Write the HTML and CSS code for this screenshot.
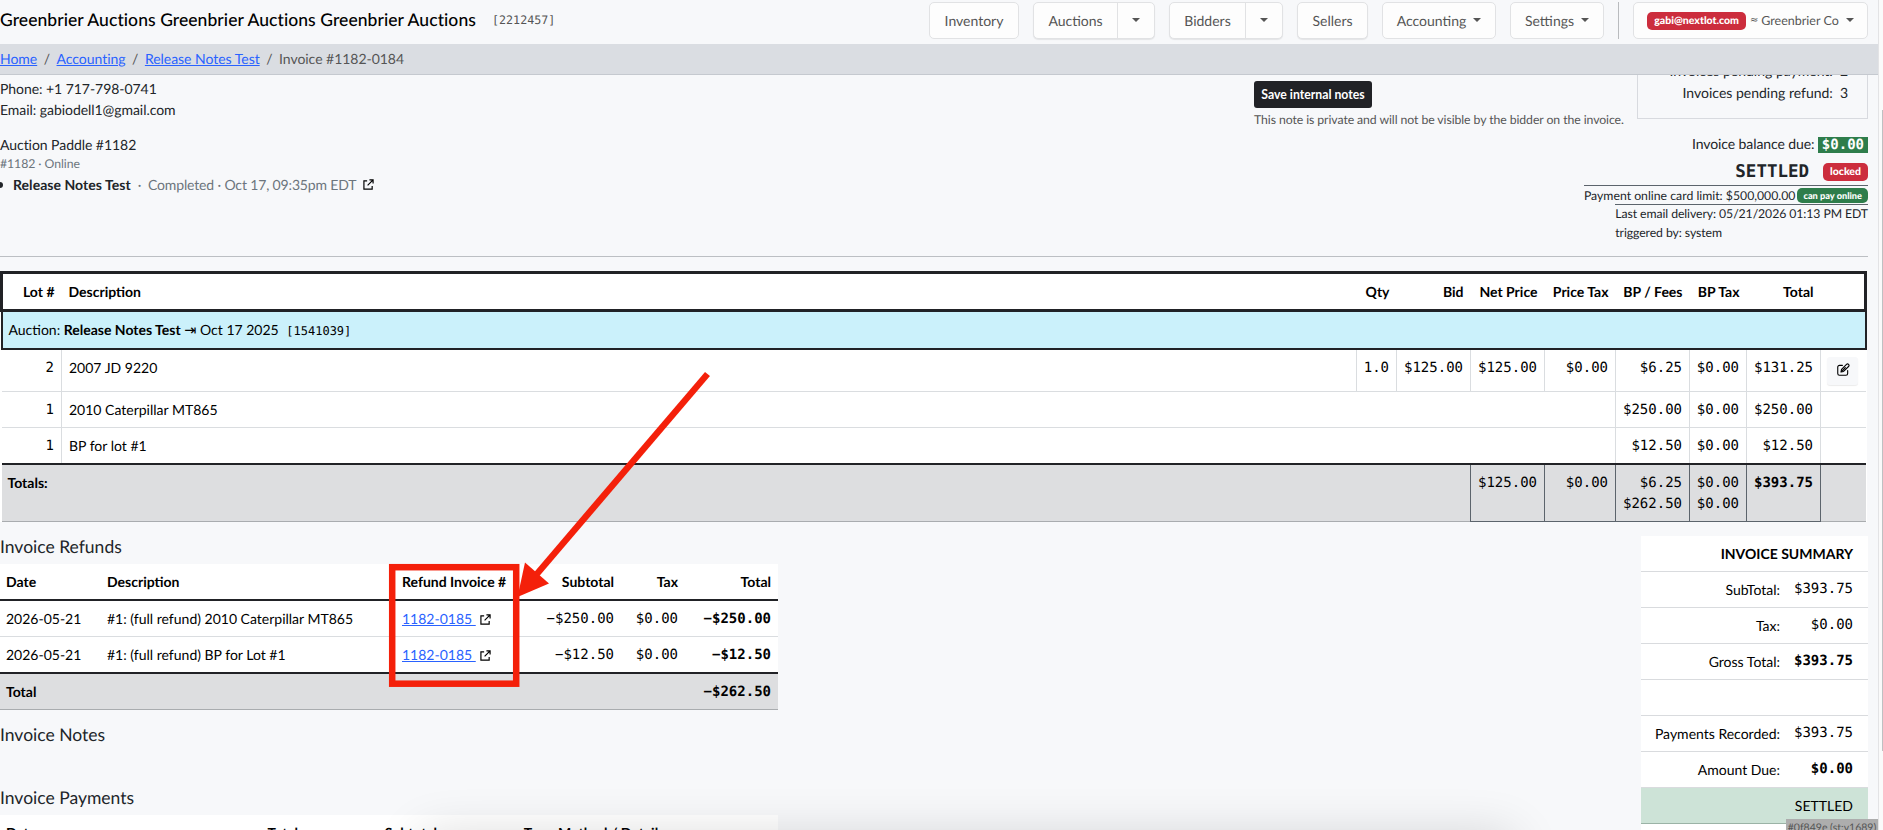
FILE: index.html
```html
<!DOCTYPE html>
<html lang="en">
<head>
    <meta charset="UTF-8">
    <meta name="viewport" content="width=device-width, initial-scale=1.0">
    <title>Invoice #1182-0184</title>
    <link rel="stylesheet" href="styles.css">
</head>
<body>
    <svg class="sprite" aria-hidden="true">
        <symbol id="external" viewBox="0 0 12 12">
            <path d="M4.500 2H1v9h9V7.500M7 1h4v4M11 1L5 7" fill="none" stroke="currentColor" stroke-width="1.300"/>
        </symbol>
        <symbol id="edit" viewBox="0 0 24 24">
            <path d="M11 4H6a3 3 0 0 0-3 3v11a3 3 0 0 0 3 3h11a3 3 0 0 0 3-3v-5M8.500 15.500l1-4.500 8.500-8.500a2.100 2.100 0 0 1 3.500 3.500L13 14.500zM11 13l5-5" fill="none" stroke="currentColor" stroke-width="1.900" stroke-linecap="round" stroke-linejoin="round"/>
        </symbol>
    </svg>

    <div class="page">
        <header class="topbar">
            <div class="brand">Greenbrier Auctions Greenbrier Auctions Greenbrier Auctions</div>
            <span class="brand-id">[2212457]</span>
            <nav class="menu">
                <a class="btn w-inventory">Inventory</a>
                <div class="btn-group w-auctions"><a>Auctions</a><a class="toggle"><i class="caret"></i></a></div>
                <div class="btn-group w-bidders"><a>Bidders</a><a class="toggle"><i class="caret"></i></a></div>
                <a class="btn w-sellers">Sellers</a>
                <a class="btn w-accounting">Accounting <i class="caret"></i></a>
                <a class="btn w-settings">Settings <i class="caret"></i></a>
                <span class="divider"></span>
                <a class="btn user"><span class="badge red">gabi@nextlot.com</span><span class="approx">≈</span><span class="company">Greenbrier Co</span> <i class="caret"></i></a>
            </nav>
        </header>

        <nav class="breadcrumb">
            <a href="#">Home</a><span class="sep">/</span><a href="#">Accounting</a><span class="sep">/</span><a href="#">Release Notes Test</a><span class="sep">/</span><span>Invoice #1182-0184</span>
        </nav>

        <main>
            <section class="info">
                <div class="contact">
                    <div>Phone: +1 717-798-0741</div>
                    <div>Email: gabiodell1@gmail.com</div>
                    <div class="paddle">Auction Paddle #1182</div>
                    <div class="small muted">#1182 · Online</div>
                    <div class="release"><i class="dot"></i><b>Release Notes Test</b><span class="muted">&nbsp; · &nbsp;Completed · Oct 17, 09:35pm EDT</span><svg class="ext"><use href="#external"/></svg></div>
                </div>
                <div class="notes">
                    <button class="save">Save internal notes</button>
                    <div class="small note">This note is private and will not be visible by the bidder on the invoice.</div>
                </div>
                <div class="status">
                    <div class="pending">
                        <div>Invoices pending payment:<span>2</span></div>
                        <div>Invoices pending refund:<span>3</span></div>
                    </div>
                    <div class="balance">Invoice balance due: <span class="amount">$0.00</span></div>
                    <div class="settled"><span class="mono">SETTLED</span><span class="badge red">locked</span></div>
                    <div class="limit">Payment online card limit: $500,000.00<span class="badge green">can pay online</span></div>
                    <div class="delivery">Last email delivery: 05/21/2026 01:13 PM EDT<br>triggered by: system</div>
                </div>
            </section>

            <table class="lots">
                <colgroup>
                    <col class="c-lot"><col><col class="c-qty"><col class="c-bid"><col class="c-net"><col class="c-ptax"><col class="c-fees"><col class="c-btax"><col class="c-total"><col class="c-edit">
                </colgroup>
                <thead>
                    <tr><th class="r">Lot #</th><th>Description</th><th class="r">Qty</th><th class="r">Bid</th><th class="r">Net Price</th><th class="r">Price Tax</th><th class="r">BP / Fees</th><th class="r">BP Tax</th><th class="r">Total</th><th></th></tr>
                </thead>
                <tbody>
                    <tr class="auction"><td colspan="10">Auction: <b>Release Notes Test</b> <span class="tab-arrow">⇥</span> Oct 17 2025 <span class="auction-id">[1541039]</span></td></tr>
                    <tr class="lot tall"><td class="num">2</td><td>2007 JD 9220</td><td class="num">1.0</td><td class="num">$125.00</td><td class="num">$125.00</td><td class="num">$0.00</td><td class="num">$6.25</td><td class="num">$0.00</td><td class="num">$131.25</td><td class="edit-cell"><button class="edit"><svg><use href="#edit"/></svg></button></td></tr>
                    <tr class="lot"><td class="num">1</td><td colspan="5">2010 Caterpillar MT865</td><td class="num">$250.00</td><td class="num">$0.00</td><td class="num">$250.00</td><td></td></tr>
                    <tr class="lot"><td class="num">1</td><td colspan="5">BP for lot #1</td><td class="num">$12.50</td><td class="num">$0.00</td><td class="num">$12.50</td><td></td></tr>
                </tbody>
                <tfoot>
                    <tr><td colspan="4"><b>Totals:</b></td><td class="num sum">$125.00</td><td class="num sum">$0.00</td><td class="num sum">$6.25<br>$262.50</td><td class="num sum">$0.00<br>$0.00</td><td class="num sum"><b>$393.75</b></td><td></td></tr>
                </tfoot>
            </table>

            <section class="lower">
                <div class="details">
                    <h5>Invoice Refunds</h5>
                    <div class="refund-wrap">
                        <table class="refunds">
                            <colgroup><col class="r-date"><col class="r-desc"><col class="r-inv"><col class="r-sub"><col class="r-tax"><col></colgroup>
                            <thead>
                                <tr><th>Date</th><th>Description</th><th>Refund Invoice #</th><th class="r">Subtotal</th><th class="r">Tax</th><th class="r">Total</th></tr>
                            </thead>
                            <tbody>
                                <tr><td>2026-05-21</td><td>#1: (full refund) 2010 Caterpillar MT865</td><td><a href="#">1182-0185&nbsp;</a><svg class="ext"><use href="#external"/></svg></td><td class="num">−$250.00</td><td class="num">$0.00</td><td class="num"><b>−$250.00</b></td></tr>
                                <tr><td>2026-05-21</td><td>#1: (full refund) BP for Lot #1</td><td><a href="#">1182-0185&nbsp;</a><svg class="ext"><use href="#external"/></svg></td><td class="num">−$12.50</td><td class="num">$0.00</td><td class="num"><b>−$12.50</b></td></tr>
                            </tbody>
                            <tfoot>
                                <tr><td colspan="5"><b>Total</b></td><td class="num"><b>−$262.50</b></td></tr>
                            </tfoot>
                        </table>
                        <!-- highlight on the refund invoice column -->
                        <svg class="callout" viewBox="380 360 340 340">
                            <rect x="392.200" y="567.200" width="124" height="116.500" fill="none" stroke="#f4200a" stroke-width="6.500"/>
                            <path d="M707.500 374L536 575" stroke="#f4200a" stroke-width="6.500"/>
                            <path d="M517.500 597L525 562.500 549 583.500z" fill="#f4200a"/>
                        </svg>
                    </div>
                    <h5 class="h-notes">Invoice Notes</h5>
                    <h5 class="h-payments">Invoice Payments</h5>
                    <table class="payments">
                        <colgroup><col class="p-date"><col class="p-total"><col class="p-sub"><col class="p-tax"><col></colgroup>
                        <tr><th>Date</th><th class="r">Total</th><th class="r">Subtotal</th><th class="r">Tax</th><th>Method / Details</th></tr>
                    </table>
                </div>
                <div class="summary">
                    <div class="row title">INVOICE SUMMARY</div>
                    <div class="row">SubTotal:<span class="value">$393.75</span></div>
                    <div class="row">Tax:<span class="value">$0.00</span></div>
                    <div class="row">Gross Total:<span class="value"><b>$393.75</b></span></div>
                    <div class="row"></div>
                    <div class="row">Payments Recorded:<span class="value">$393.75</span></div>
                    <div class="row">Amount Due:<span class="value"><b>$0.00</b></span></div>
                    <div class="row done">SETTLED</div>
                </div>
            </section>
            <div class="bottom-shade"></div>
            <div class="build">#0f849e (st:v1689)</div>
        </main>
    </div>
    <div class="scrollbar"><div class="thumb"></div></div>
</body>
</html>
```

FILE: styles.css
```css
* {
    box-sizing: border-box;
}
body {
    margin: 0;
    height: 830px;
    display: flex;
    overflow: hidden;
    background: #f7f8fa;
    color: #212529;
    font-family: Lato, sans-serif;
    font-size: 14px;
    line-height: 21px;
    text-rendering: geometricPrecision;
}
.sprite {
    position: absolute;
    width: 0;
    height: 0;
}
a {
    color: #2962ff;
}
.page {
    width: 1878px;
    height: 830px;
    display: flex;
    flex-direction: column;
}

/* Top bar */
.topbar {
    height: 44px;
    flex: none;
    display: flex;
    align-items: center;
    padding: 0 10px 3px 0;
}
.brand {
    width: 492px;
    margin-bottom: 2px;
    color: #000;
    font-size: 17.5px;
    font-weight: 500;
    letter-spacing: 0.06px;
    white-space: nowrap;
}
.brand-id {
    color: #555;
    font-family: "DejaVu Sans Mono", monospace;
    font-size: 11.7px;
}
.menu {
    margin-left: auto;
    display: flex;
    gap: 14px;
}
.menu a {
    color: #555;
    font-size: 14px;
}
.btn, .btn-group {
    height: 37px;
    display: flex;
    align-items: center;
    justify-content: center;
    background: #fdfdfd;
    border: 1px solid #e1e2e4;
    border-radius: 5px;
    white-space: nowrap;
}
.btn-group a {
    flex: 1;
    text-align: center;
}
.btn-group, .w-sellers {
    box-shadow: 0 1px 1px rgba(0, 0, 0, 0.08);
}
.btn-group .toggle {
    flex: none;
    width: 37px;
    height: 100%;
    display: flex;
    align-items: center;
    justify-content: center;
    border-left: 1px solid #e1e2e4;
}
.w-inventory { width: 90px; }
.w-auctions { width: 122px; }
.w-bidders { width: 114px; }
.w-sellers { width: 71px; }
.w-accounting { width: 114px; }
.w-settings { width: 94px; }
.user { width: 235px; }
.caret {
    border: 4px solid transparent;
    border-top-color: #555;
    border-bottom: 0;
    margin-bottom: 2px;
}
.btn .caret {
    margin-left: 7px;
}
.divider {
    width: 1px;
    background: #b9bbbe;
}
.badge {
    display: inline-block;
    padding: 0 7px;
    border-radius: 5px;
    color: #fff;
    font-size: 10.5px;
    font-weight: 900;
    line-height: 18px;
}
.red { background: #cc2d3d; }
.green { background: #2e7d4b; }
.approx {
    margin: 0 3px 0 4px;
    font-family: "DejaVu Sans", sans-serif;
    font-size: 10px;
}
.menu .company {
    font-size: 12.5px;
}

.breadcrumb {
    height: 31px;
    flex: none;
    background: #dadde2;
    border-bottom: 1px solid #c5c9cf;
    color: #555;
    letter-spacing: -0.03px;
    line-height: 30px;
}
.sep {
    margin: 0 6.5px;
}

main {
    flex: 1;
    min-height: 0;
    overflow: hidden;
    position: relative;
}

/* Bidder info */
.info {
    width: 1868px;
    height: 182px;
    display: flex;
    border-bottom: 1px solid #bcbfc3;
}
.contact {
    width: 1254px;
    flex: none;
    padding-top: 3px;
    letter-spacing: -0.05px;
}
.small {
    font-size: 12.25px;
    line-height: 18px;
}
.muted {
    color: #6c757d;
}
.paddle {
    margin-top: 14px;
}
.release {
    display: flex;
    align-items: center;
    margin-top: 1px;
}
.release b {
    letter-spacing: 0.05px;
}
.release .muted {
    letter-spacing: -0.15px;
}
.dot {
    width: 3px;
    height: 6px;
    margin-right: 10px;
    background: #212529;
    border-radius: 0 3px 3px 0;
}
.ext {
    width: 11px;
    height: 11px;
    margin-left: 4px;
    color: #000;
    vertical-align: -1px;
}
.release .ext {
    margin-left: 7px;
}
.notes {
    width: 320px;
    flex: none;
    padding-top: 6px;
    white-space: nowrap;
}
.save {
    display: block;
    width: 118px;
    height: 27px;
    padding: 0;
    border: 0;
    border-radius: 3px;
    background: #212226;
    color: #fff;
    font: bold 12.25px/25px Lato, sans-serif;
}
.note {
    margin-top: 3px;
    color: #555;
    letter-spacing: -0.08px;
}
.status {
    flex: 1;
    display: flex;
    flex-direction: column;
    align-items: flex-end;
    white-space: nowrap;
}
.pending {
    width: 231px;
    height: 60px;
    margin-top: -16px;
    padding-right: 19px;
    border: 1px solid #d8dadf;
    text-align: right;
    line-height: 22px;
}
.pending span {
    margin-left: 7px;
}
.balance {
    margin-top: 14px;
    letter-spacing: -0.1px;
}
.amount {
    display: inline-block;
    padding: 0 4px;
    background: #2e7d4b;
    color: #fff;
    font: bold 14px/16px "DejaVu Sans Mono", monospace;
    letter-spacing: 0;
}
.settled {
    height: 28px;
    margin-top: 3px;
    padding-top: 2px;
    display: flex;
    align-items: center;
}
.mono {
    margin-right: 14px;
    font: bold 17.5px/21px "DejaVu Sans Mono", monospace;
}
.limit {
    display: flex;
    align-items: center;
    height: 19px;
    border-top: 1px solid #5c646c;
    font-size: 12.25px;
}
.limit .badge {
    margin-left: 2px;
    padding: 0 6px;
    font-size: 9.2px;
    line-height: 15px;
}
.delivery {
    border-top: 1px solid #5c646c;
    font-size: 12.25px;
    letter-spacing: -0.08px;
    line-height: 18.5px;
}

/* Tables */
table {
    border-collapse: collapse;
    table-layout: fixed;
    background: #fff;
    color: #000;
}
th, td {
    padding: 7px 7px 7px 6px;
    text-align: left;
    vertical-align: top;
    white-space: nowrap;
}
.r {
    text-align: right;
}
.num {
    padding-top: 8px;
    padding-bottom: 6px;
    text-align: right;
    font-family: "DejaVu Sans Mono", monospace;
}
.lots {
    width: 1867px;
    margin-top: 14px;
}
.lots th:nth-child(2), .lot td:nth-child(2) {
    padding-left: 7px;
}
.lots thead tr {
    height: 38px;
    border: 3px solid #212226;
}
.auction {
    height: 37px;
    background: #cbf1fb;
    border: 2px solid #212226;
}
.auction td {
    padding-bottom: 6px;
}
.tab-arrow {
    font-family: "DejaVu Sans", sans-serif;
    font-size: 14.5px;
    line-height: 1;
}
.auction-id {
    margin-left: 4px;
    font-family: "DejaVu Sans Mono", monospace;
    font-size: 12px;
}
.lot {
    height: 36px;
    border-bottom: 1px solid #dadde0;
}
.tall {
    height: 42px;
}
.lot td + td {
    border-left: 1px solid #dadde0;
}
.lots tfoot tr {
    height: 57px;
    background: #dddee0;
    border-top: 2px solid #212226;
    border-bottom: 1px solid #a9acaf;
}
.sum {
    border: 1px solid #5c646c;
    border-top: 0;
}
.lots tfoot td:last-child {
    border-left: 1px solid #5c646c;
}
.c-lot { width: 60px; }
.c-qty { width: 40px; }
.c-bid { width: 74px; }
.c-net { width: 74px; }
.c-ptax { width: 71px; }
.c-fees { width: 74px; }
.c-btax { width: 57px; }
.c-total { width: 74px; }
.c-edit { width: 45px; }
.lots .edit-cell {
    padding: 7px 6px 6px;
}
.edit {
    display: flex;
    align-items: center;
    justify-content: center;
    width: 31px;
    height: 28px;
    padding: 0 0 2px;
    border: 0;
    border-radius: 3px;
    background: #f7f8fa;
    box-shadow: 0 1px 1px rgba(0, 0, 0, 0.08);
}
.edit svg {
    width: 14px;
    height: 14px;
}

.lower {
    width: 1868px;
    display: flex;
    justify-content: space-between;
}
.details {
    width: 778px;
    padding-top: 14px;
}
h5 {
    margin: 0;
    font-size: 17.5px;
    font-weight: 400;
    line-height: 21px;
}
.refund-wrap {
    position: relative;
    margin-top: 7px;
}
.refunds, .payments {
    width: 778px;
}
.refunds tr {
    height: 36px;
}
.refunds tbody {
    border-top: 2px solid #212226;
    border-bottom: 2px solid #212226;
}
.refunds tbody tr + tr {
    border-top: 1px solid #dadde0;
}
.refunds tfoot tr {
    background: #dddee0;
    border-bottom: 1px solid #a9acaf;
}
.r-date { width: 101px; }
.r-desc { width: 295px; }
.r-inv { width: 130px; }
.r-sub { width: 95px; }
.r-tax { width: 64px; }
.callout {
    position: absolute;
    left: 380px;
    top: -204px;
    width: 340px;
    height: 340px;
}
.h-notes {
    margin-top: 14px;
}
.h-payments {
    margin-top: 42px;
    margin-bottom: 7px;
}
.p-date { width: 205px; }
.p-total { width: 100px; }
.p-sub { width: 139px; }
.p-tax { width: 108px; }

/* Summary */
.summary {
    width: 227px;
    margin-top: 14px;
    background: #fff;
    color: #000;
}
.row {
    height: 36px;
    padding: 7px 15px 7px 0;
    display: flex;
    justify-content: flex-end;
    border-bottom: 1px solid #d9dbde;
    white-space: nowrap;
}
.title {
    font-weight: bold;
}
.value {
    width: 73px;
    text-align: right;
    font-family: "DejaVu Sans Mono", monospace;
}
.done {
    background: #cde3d7;
    border-bottom-color: #9bb3a6;
}
.bottom-shade {
    position: absolute;
    left: 430px;
    bottom: -44px;
    width: 1075px;
    height: 30px;
    box-shadow: 0 0 50px 8px rgba(0, 0, 0, 0.16);
    pointer-events: none;
}
.build {
    position: absolute;
    right: 0;
    bottom: -7px;
    width: 92px;
    height: 18px;
    background: #adadad;
    color: #555;
    font-size: 10.5px;
    line-height: 19px;
    text-align: center;
}
.scrollbar {
    width: 5px;
    padding-top: 110px;
    background: #fafafa;
    border-left: 1px solid #e3e3e5;
}
.thumb {
    height: 641px;
    margin-left: 3px;
    background: #bfc0c2;
}
```
